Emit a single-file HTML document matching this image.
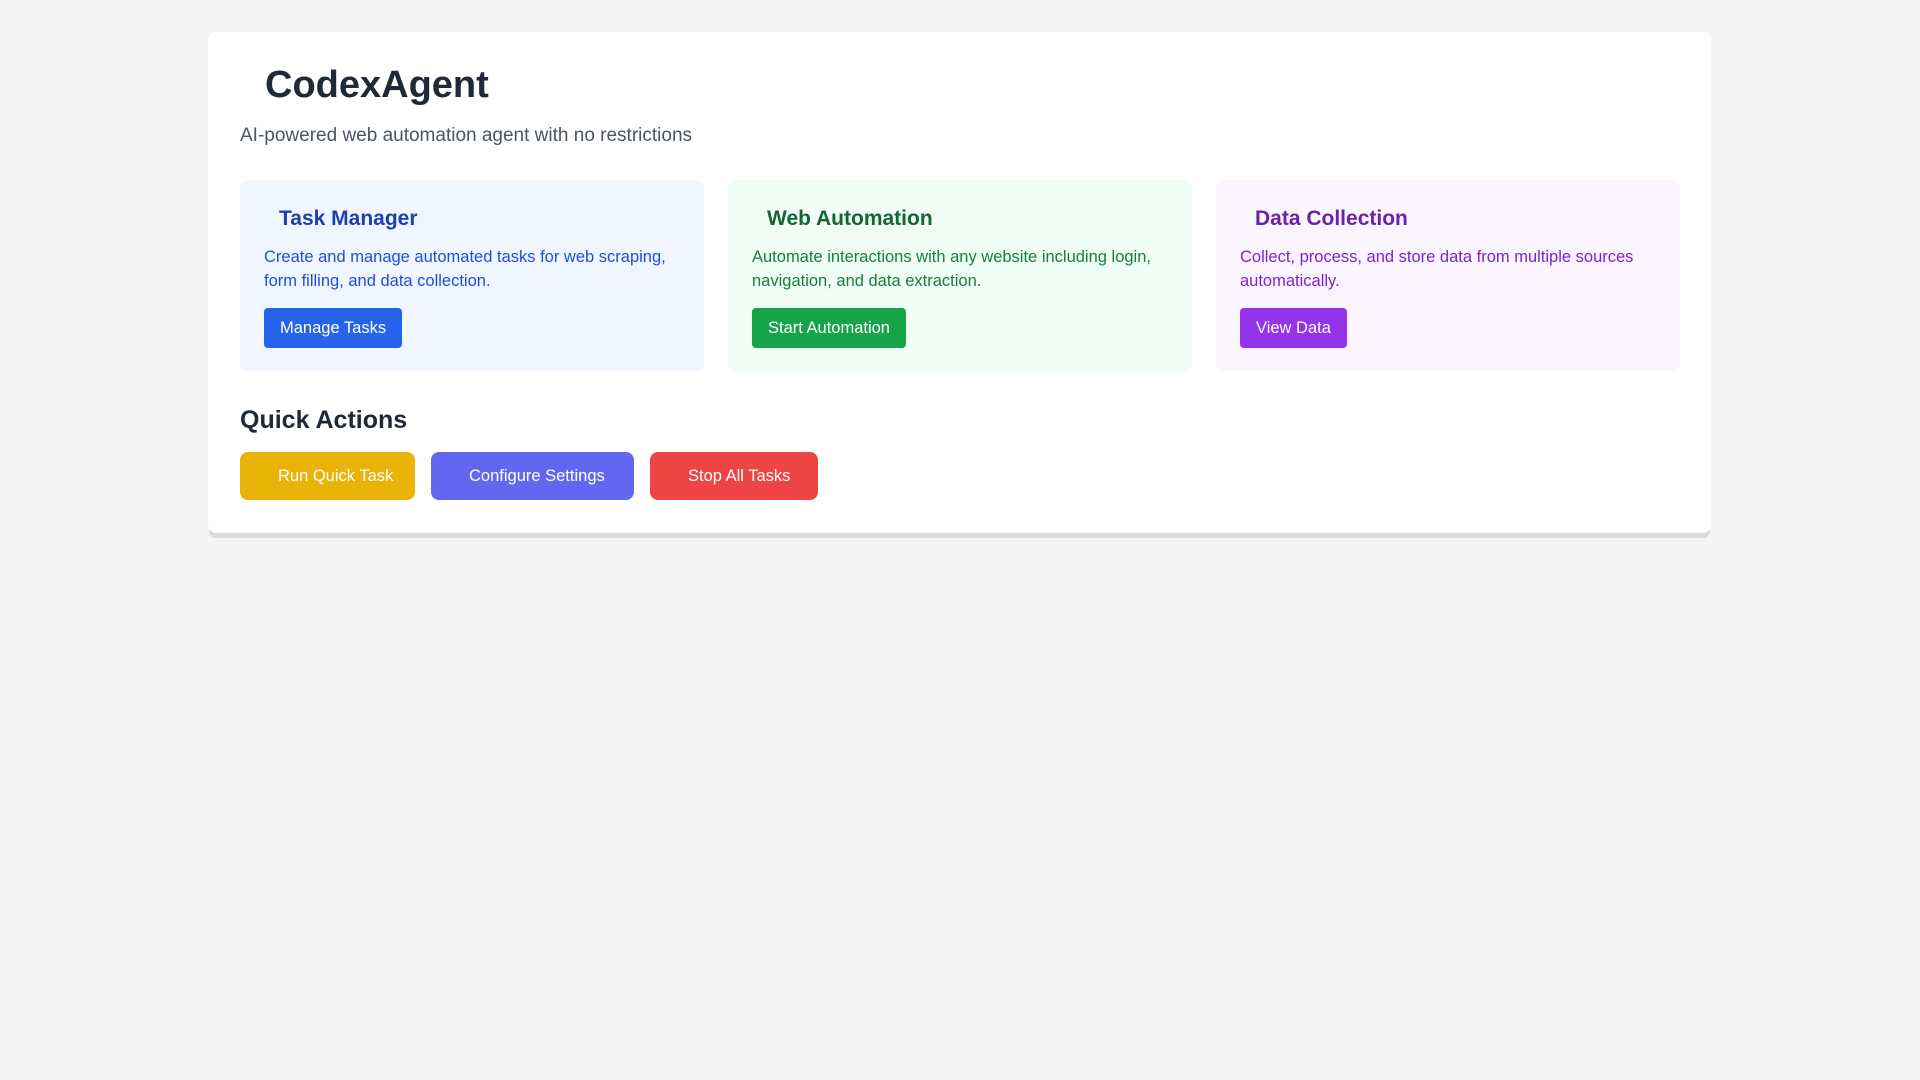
<!DOCTYPE html>
<html><head><meta charset="utf-8"><style>
*{box-sizing:border-box;margin:0;padding:0}
body{background:#f3f4f6;font-family:"Liberation Sans",sans-serif;width:1920px;height:1080px;}
.wrap{position:absolute;left:208px;top:32px;width:1503px;height:501px;background:#fff;border-radius:8px;padding:32px;box-shadow:0 6px 0 -1px #dadbde;}
h1{font-size:38px;font-weight:bold;color:#1f2937;line-height:44px;position:absolute;top:31px;left:57px;margin:0}
.sub{position:absolute;top:93px;left:32px;font-size:19px;color:#4b5563;}
.cards{position:absolute;top:148px;left:32px;display:flex;gap:24px}
.card{width:464px;height:191px;border-radius:8px;padding:24px}
.card h3{font-size:21px;font-weight:bold;margin-left:15px;margin-top:1px;line-height:28px}
.card p{font-size:16.5px;line-height:24px;margin-top:12px}
.card .b{display:inline-block;margin-top:15px;height:40px;line-height:40px;padding:0 16px;color:#fff;font-size:16.5px;border-radius:4px}
h2{position:absolute;top:374px;left:32px;font-size:25px;font-weight:bold;color:#1f2937}
.qa{position:absolute;top:420px;left:32px;display:flex;gap:16px}
.qa div{height:48px;line-height:48px;border-radius:8px;color:#fff;font-size:16.5px;padding:0 0 0 38px;white-space:nowrap}
</style></head><body>
<div class="wrap">
<h1>CodexAgent</h1>
<div class="sub">AI-powered web automation agent with no restrictions</div>
<div class="cards">
<div class="card" style="background:#eff6ff"><h3 style="color:#1e40af">Task Manager</h3><p style="color:#1d4ed8">Create and manage automated tasks for web scraping, form filling, and data collection.</p><span class="b" style="background:#2563eb">Manage Tasks</span></div>
<div class="card" style="background:#f0fdf4"><h3 style="color:#166534">Web Automation</h3><p style="color:#15803d">Automate interactions with any website including login, navigation, and data extraction.</p><span class="b" style="background:#16a34a">Start Automation</span></div>
<div class="card" style="background:#faf5ff"><h3 style="color:#6b21a8">Data Collection</h3><p style="color:#7e22ce">Collect, process, and store data from multiple sources automatically.</p><span class="b" style="background:#9333ea">View Data</span></div>
</div>
<h2>Quick Actions</h2>
<div class="qa">
<div style="background:#eab308;width:175px">Run Quick Task</div>
<div style="background:#6366f1;width:203px">Configure Settings</div>
<div style="background:#ef4444;width:168px">Stop All Tasks</div>
</div>
</div>
</body></html>
